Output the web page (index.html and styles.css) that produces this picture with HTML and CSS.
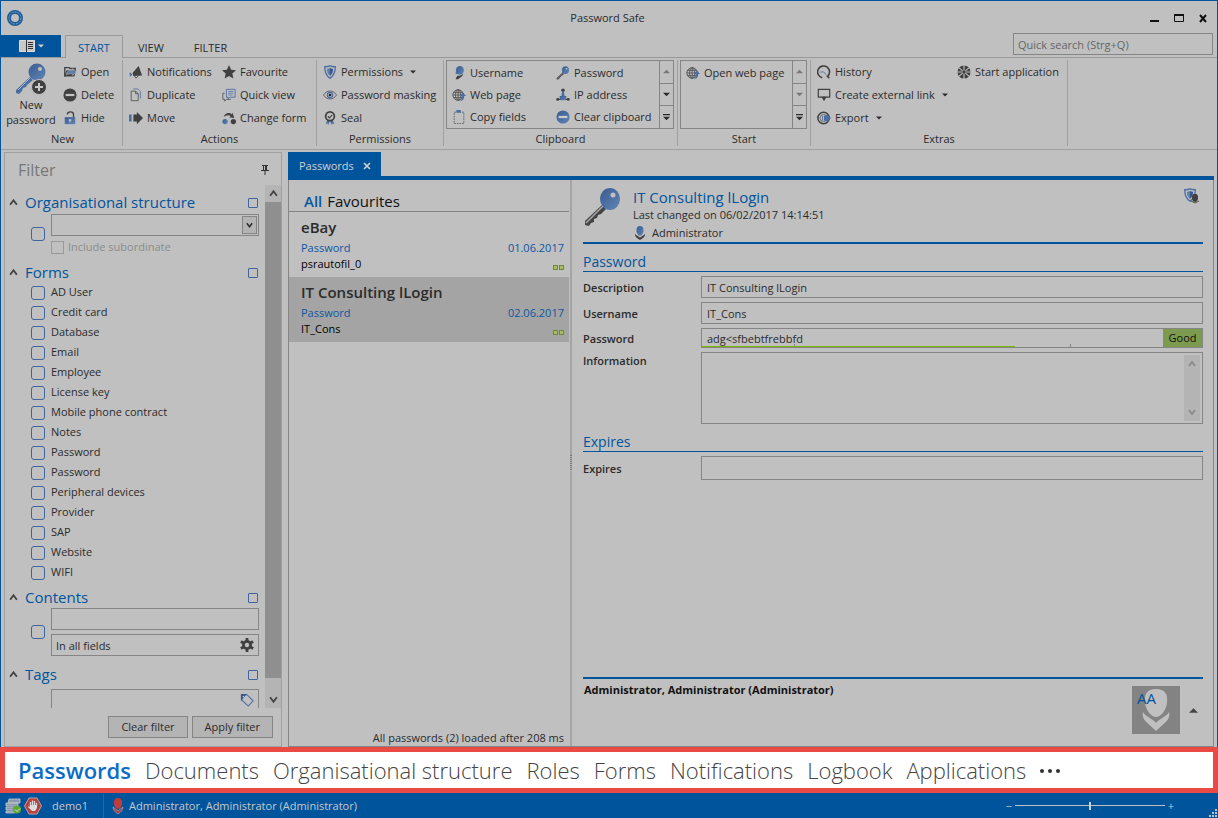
FILE: index.html
```html
<!DOCTYPE html>
<html lang="en">
<head>
  <meta charset="UTF-8" />
  <meta name="viewport" content="width=device-width, initial-scale=1.0" />
  <title>Password Safe</title>
  <link rel="stylesheet" href="styles.css">
</head>
<body>

<!-- Icon sprites -->
<svg class="sprites" aria-hidden="true">
  <defs>
    <linearGradient id="steel" x1="0" y1="0" x2="1" y2="1">
      <stop offset="0" stop-color="#3a5c92" />
      <stop offset="1" stop-color="#6084b4" />
    </linearGradient>
  </defs>
  <symbol id="i-key" viewBox="0 0 40 40">
    <path d="M19 18L2 34v4l4 1 2-3 3-1v-3l3-1 1-3 3-1 5-5z" fill="#444" />
    <path d="M20 19L3 36" stroke="#aaa" stroke-width="1.5" />
    <ellipse cx="27" cy="12" rx="10" ry="11" fill="url(#steel)" />
    <circle cx="30" cy="8" r="2.5" fill="#c0c0c0" />
  </symbol>
  <symbol id="i-newkey" viewBox="0 0 32 32">
    <path d="M15 14L1 27v3l3 1 3-3 1-3 3-1 1-2 6-5z" fill="#4c6da0" />
    <path d="M15 15L3 27" stroke="#a8b4c6" stroke-width="1" />
    <circle cx="22" cy="9" r="8.5" fill="url(#steel)" />
    <circle cx="25" cy="6" r="2" fill="#c0c0c0" />
    <circle cx="24" cy="24" r="7.5" fill="#404040" stroke="#c0c0c0" />
    <path d="M24 20v8M20 24h8" stroke="#c8c8c8" stroke-width="2" />
  </symbol>
  <symbol id="i-open" viewBox="0 0 16 16">
    <path d="M2 13V3h5l1 1h6v2" fill="none" stroke="#404040" stroke-width="1.5" />
    <path d="M1 13h12l2-7H4z" fill="#444" />
    <path d="M4 11c0-4 3-5 7-5V4l4 4-4 4v-2c-3 0-5 0-7 1z" fill="#5c7cac" stroke="#c0c0c0" stroke-width=".6" />
  </symbol>
  <symbol id="i-delete" viewBox="0 0 16 16">
    <circle cx="8" cy="8" r="7.5" fill="#404040" />
    <path d="M3 8h10" stroke="#c4c4c4" stroke-width="2.5" />
  </symbol>
  <symbol id="i-lock" viewBox="0 0 16 16">
    <path d="M5 4c0-4 7-4 7 0v4" fill="none" stroke="#404040" stroke-width="1.5" />
    <path d="M2 7h12v8H2z" fill="url(#steel)" />
    <path d="M8 9v4M6.5 10.5h3" stroke="#c8c8c8" stroke-width="1.3" />
  </symbol>
  <symbol id="i-horn" viewBox="0 0 16 16">
    <path d="M11 1l4 11-10 .5L4 9z" fill="#404040" />
    <path d="M1 9l2 3M1 12h1" stroke="#4a6da3" stroke-width="2" />
    <path d="M6 12l2 3 3-3" fill="none" stroke="#404040" />
  </symbol>
  <symbol id="i-copy" viewBox="0 0 16 16">
    <path d="M5 1h5l3 3v8" fill="none" stroke="#5577a8" />
    <path d="M2.5 3.5h5l3 3v8h-8z" fill="#c0c0c0" stroke="#555" />
    <path d="M7.5 3.5v3h3" fill="none" stroke="#555" />
  </symbol>
  <symbol id="i-move" viewBox="0 0 16 16">
    <path d="M0 4h3v8H0z" fill="#4a6da3" />
    <path d="M5 4h4V1l7 7-7 7v-3H5z" fill="#404040" />
  </symbol>
  <symbol id="i-star" viewBox="0 0 16 16">
    <path d="M8 0l2.4 5.3 5.6.6-4.2 3.8L13 15.5 8 12.6 3 15.5l1.2-5.8L0 5.9l5.6-.6z" fill="#404040" />
  </symbol>
  <symbol id="i-view" viewBox="0 0 16 16">
    <path d="M5 1.5h10v9H9l-2 2v-2H5z" fill="none" stroke="#4a6da3" />
    <path d="M7 4h6M7 6h6M7 8h5" stroke="#4a6da3" stroke-width=".8" />
    <path d="M3 6H1v7h2v2l2-2h5" fill="none" stroke="#555" />
  </symbol>
  <symbol id="i-change" viewBox="0 0 16 16">
    <circle cx="3.5" cy="12" r="3" fill="url(#steel)" />
    <circle cx="13" cy="12" r="3" fill="#404040" />
    <path d="M2 7c1-5 7-6 9-3l1-2 2 6-6-1 2-1C8 4 4 5 2 7z" fill="#404040" />
  </symbol>
  <symbol id="i-shield" viewBox="0 0 16 16">
    <path d="M8 1c2 1 4 1 6 1 0 6-1 10-6 13C3 12 2 8 2 2c2 0 4 0 6-1z" fill="#c0c0c0" stroke="#4a6da3" stroke-width="1.5" />
    <path d="M8 3.5v9C5 10 4.5 7 4.5 4.5z" fill="#5c7cac" />
    <path d="M8 3.5v9c3-2.5 3.5-5.5 3.5-8z" fill="#37588d" />
  </symbol>
  <symbol id="i-eye" viewBox="0 0 16 16">
    <path d="M.5 8c4-6 11-6 15 0-4 6-11 6-15 0z" fill="none" stroke="#555" />
    <circle cx="8" cy="8" r="3" fill="none" stroke="#4a6da3" stroke-width="1.5" />
    <circle cx="8" cy="8" r="1.5" fill="#222" />
  </symbol>
  <symbol id="i-seal" viewBox="0 0 16 16">
    <path d="M5 10l-2 5 2-1 1 2 2-5M11 10l2 5-2-1-1 2-2-5" fill="#4a6da3" />
    <circle cx="8" cy="6" r="5" fill="#c0c0c0" stroke="#404040" stroke-width="2" />
    <path d="M5.500 6l2 2 3-3.5" fill="none" stroke="#404040" stroke-width="1.3" />
  </symbol>
  <symbol id="i-user" viewBox="0 0 16 16">
    <ellipse cx="9" cy="5" rx="4.5" ry="5" fill="url(#steel)" />
    <path d="M5 4l-1 5h3z" fill="#4a6da3" />
    <path d="M4 15l2-4h3l4-2c-1 3-4 4-6 6z" fill="#404040" />
  </symbol>
  <symbol id="i-globe" viewBox="0 0 16 16">
    <circle cx="7" cy="8" r="6" fill="none" stroke="#484848" />
    <ellipse cx="7" cy="8" rx="3" ry="6" fill="none" stroke="#484848" stroke-width=".9" />
    <path d="M1 8h12M2 5h10M2 11h10M7 2v12" stroke="#484848" stroke-width=".9" />
    <path d="M8 15c4 0 3-3 3-6H9l3.5-4L16 9h-2c0 4-2 6-6 6z" fill="#4a6da3" />
  </symbol>
  <symbol id="i-paste" viewBox="0 0 16 16">
    <path d="M2.5 2.5h11v13h-11z" fill="none" stroke="#606060" stroke-dasharray="2 1" />
    <path d="M5 0h5v3H5z" fill="#4a6da3" />
  </symbol>
  <symbol id="i-ip" viewBox="0 0 16 16">
    <circle cx="8" cy="2.5" r="2" fill="#404040" />
    <path d="M7 4h2l1 6H6z" fill="#4a6da3" />
    <path d="M1 13h14" stroke="#404040" stroke-width="1.5" />
    <path d="M4 9h8l-1 5H5z" fill="url(#steel)" />
    <circle cx="2" cy="13" r="1.7" fill="#404040" />
    <circle cx="14" cy="13" r="1.7" fill="#404040" />
  </symbol>
  <symbol id="i-clear" viewBox="0 0 16 16">
    <circle cx="8" cy="8" r="7.5" fill="url(#steel)" />
    <path d="M3 8h10" stroke="#ccc" stroke-width="2.5" />
  </symbol>
  <symbol id="i-clock" viewBox="0 0 16 16">
    <path d="M6 14.5a6.800 6.800 0 1 1 6-1.5l2 2" fill="none" stroke="#404040" stroke-width="1.8" />
    <path d="M3 8h5l3 4" fill="none" stroke="#5577a8" />
  </symbol>
  <symbol id="i-link" viewBox="0 0 16 16">
    <path d="M1.5 1.5h13v9h-13z" fill="none" stroke="#404040" stroke-width="1.4" />
    <path d="M5 10h6l-3 5z" fill="#404040" />
  </symbol>
  <symbol id="i-export" viewBox="0 0 16 16">
    <circle cx="7.5" cy="8" r="6.5" fill="none" stroke="#404040" stroke-width="1.8" />
    <circle cx="7.5" cy="8" r="4" fill="none" stroke="#555" stroke-width=".8" />
    <path d="M6 5h1v6H6zM8 5h3V3l5 5-5 5v-2H8z" fill="#4a6da3" />
  </symbol>
  <symbol id="i-app" viewBox="0 0 16 16">
    <circle cx="8" cy="8" r="7.5" fill="#404040" />
    <path d="M8 0v16M0 8h16M2 3l12 10M14 3L2 13" stroke="#c0c0c0" stroke-width="1.3" />
    <circle cx="8" cy="8" r="2" fill="#404040" />
  </symbol>
  <symbol id="i-person" viewBox="0 0 16 16">
    <path d="M8 0c3 0 4 2 4 5s-2 6-4 6-4-3-4-6 1-5 4-5z" fill="url(#steel)" />
    <path d="M2 9l6 4 6-4c0 3-3 5-6 7-3-2-6-4-6-7z" fill="#404040" />
  </symbol>
  <symbol id="i-up" viewBox="0 0 8 8">
    <path d="M1 6l3-4 3 4" fill="none" stroke="currentColor" stroke-width="1.7" />
  </symbol>
  <symbol id="i-down" viewBox="0 0 8 8">
    <path d="M1 2l3 4 3-4" fill="none" stroke="currentColor" stroke-width="1.7" />
  </symbol>
  <symbol id="i-tri" viewBox="0 0 8 8">
    <path d="M0 2h8L4 6z" fill="currentColor" />
  </symbol>
  <symbol id="i-triup" viewBox="0 0 8 8">
    <path d="M0 6h8L4 2z" fill="currentColor" />
  </symbol>
  <symbol id="i-more" viewBox="0 0 8 8">
    <path d="M0 0h8v1.500H0zM0 3h8L4 7z" fill="currentColor" />
  </symbol>
</svg>

<div class="window">
  <header class="titlebar">
    <svg class="app-logo" viewBox="0 0 16 16"><circle cx="8" cy="8" r="6" fill="none" stroke="#1d5c98" stroke-width="4" /><circle cx="8" cy="8" r="6" fill="none" stroke="#7ba3c6" stroke-width="1" stroke-dasharray="2 1" /></svg>
    <h1>Password Safe</h1>
    <div class="window-buttons">
      <button aria-label="Minimise"><svg viewBox="0 0 10 10"><path d="M0 7h9v2H0z" fill="#111" /></svg></button>
      <button aria-label="Maximise"><svg viewBox="0 0 10 10"><path d="M.5 1.5h9v7h-9z" fill="none" stroke="#111" /><path d="M0 1h10v2H0z" fill="#111" /></svg></button>
      <button aria-label="Close"><svg viewBox="0 0 10 10"><path d="M2 2l6 7M8 2L2 9" stroke="#111" stroke-width="2" /></svg></button>
    </div>
  </header>

  <div class="tabs">
    <button class="file-tab" aria-label="Application menu">
      <svg class="file-icon" viewBox="0 0 16 12"><path d="M.5.5h15v11H.5z" fill="#c8c8c8" stroke="#ddd" /><path d="M7 0h1v12H7z" fill="#333" /><path d="M9 2.500h5M9 4.500h5M9 6.500h5M9 8.500h5" stroke="#333" /></svg>
      <svg class="caret"><use href="#i-tri" /></svg>
    </button>
    <button class="tab active">START</button>
    <button class="tab">VIEW</button>
    <button class="tab">FILTER</button>
    <input class="quick-search" type="text" placeholder="Quick search (Strg+Q)" aria-label="Quick search" />
  </div>

  <div class="ribbon">
    <section class="group group-new">
      <div class="group-body">
        <button class="big"><svg><use href="#i-newkey" /></svg><span>New<br>password</span></button>
        <div class="col">
          <button class="cmd"><svg><use href="#i-open" /></svg>Open</button>
          <button class="cmd"><svg><use href="#i-delete" /></svg>Delete</button>
          <button class="cmd"><svg><use href="#i-lock" /></svg>Hide</button>
        </div>
      </div>
      <h2>New</h2>
    </section>
    <section class="group group-actions">
      <div class="group-body">
        <div class="col">
          <button class="cmd"><svg><use href="#i-horn" /></svg>Notifications</button>
          <button class="cmd"><svg><use href="#i-copy" /></svg>Duplicate</button>
          <button class="cmd"><svg><use href="#i-move" /></svg>Move</button>
        </div>
        <div class="col">
          <button class="cmd"><svg><use href="#i-star" /></svg>Favourite</button>
          <button class="cmd"><svg><use href="#i-view" /></svg>Quick view</button>
          <button class="cmd"><svg><use href="#i-change" /></svg>Change form</button>
        </div>
      </div>
      <h2>Actions</h2>
    </section>
    <section class="group group-permissions">
      <div class="group-body">
        <div class="col">
          <button class="cmd"><svg><use href="#i-shield" /></svg>Permissions<svg class="caret"><use href="#i-tri" /></svg></button>
          <button class="cmd"><svg><use href="#i-eye" /></svg>Password masking</button>
          <button class="cmd"><svg><use href="#i-seal" /></svg>Seal</button>
        </div>
      </div>
      <h2>Permissions</h2>
    </section>
    <section class="group group-clipboard">
      <div class="gallery">
        <div class="gallery-items">
          <button class="cmd"><svg><use href="#i-user" /></svg>Username</button>
          <button class="cmd"><svg><use href="#i-key" /></svg>Password</button>
          <button class="cmd"><svg><use href="#i-globe" /></svg>Web page</button>
          <button class="cmd"><svg><use href="#i-ip" /></svg>IP address</button>
          <button class="cmd"><svg><use href="#i-paste" /></svg>Copy fields</button>
          <button class="cmd"><svg><use href="#i-clear" /></svg>Clear clipboard</button>
        </div>
        <div class="gallery-scroll">
          <button class="off" aria-label="Up"><svg><use href="#i-triup" /></svg></button>
          <button aria-label="Down"><svg><use href="#i-tri" /></svg></button>
          <button aria-label="More"><svg><use href="#i-more" /></svg></button>
        </div>
      </div>
      <h2>Clipboard</h2>
    </section>
    <section class="group group-start">
      <div class="gallery">
        <div class="gallery-items">
          <button class="cmd"><svg><use href="#i-globe" /></svg>Open web page</button>
        </div>
        <div class="gallery-scroll">
          <button class="off" aria-label="Up"><svg><use href="#i-triup" /></svg></button>
          <button class="off" aria-label="Down"><svg><use href="#i-tri" /></svg></button>
          <button aria-label="More"><svg><use href="#i-more" /></svg></button>
        </div>
      </div>
      <h2>Start</h2>
    </section>
    <section class="group group-extras">
      <div class="group-body">
        <div class="col">
          <button class="cmd"><svg><use href="#i-clock" /></svg>History</button>
          <button class="cmd"><svg><use href="#i-link" /></svg>Create external link<svg class="caret"><use href="#i-tri" /></svg></button>
          <button class="cmd"><svg><use href="#i-export" /></svg>Export<svg class="caret"><use href="#i-tri" /></svg></button>
        </div>
        <div class="col">
          <button class="cmd"><svg><use href="#i-app" /></svg>Start application</button>
        </div>
      </div>
      <h2>Extras</h2>
    </section>
  </div>

  <main class="workspace">
    <aside class="filter">
      <div class="filter-title">
        <h2>Filter</h2>
        <button class="pin" aria-label="Pin panel"><svg viewBox="0 0 8 10"><path d="M2.5 0v5M1 .5h6M0 5.5h8M4 6v4" fill="none" stroke="#333" /><path d="M4 0h2v5H4z" fill="#333" /></svg></button>
      </div>
      <div class="filter-scroll">
        <div class="filter-list">
          <section class="org">
            <h3><svg><use href="#i-up" /></svg><label for="all-org">Organisational structure</label><input type="checkbox" id="all-org" /></h3>
            <div class="filter-row">
              <input type="checkbox" aria-label="Use organisational structure" />
              <div class="fields">
                <div class="combo"><select aria-label="Organisational unit"><option></option></select><svg><use href="#i-down" /></svg></div>
                <label class="sub"><input type="checkbox" disabled />Include subordinate</label>
              </div>
            </div>
          </section>
          <section class="forms">
            <h3><svg><use href="#i-up" /></svg><label for="all-forms">Forms</label><input type="checkbox" id="all-forms" /></h3>
            <label class="check"><input type="checkbox" />AD User</label>
            <label class="check"><input type="checkbox" />Credit card</label>
            <label class="check"><input type="checkbox" />Database</label>
            <label class="check"><input type="checkbox" />Email</label>
            <label class="check"><input type="checkbox" />Employee</label>
            <label class="check"><input type="checkbox" />License key</label>
            <label class="check"><input type="checkbox" />Mobile phone contract</label>
            <label class="check"><input type="checkbox" />Notes</label>
            <label class="check"><input type="checkbox" />Password</label>
            <label class="check"><input type="checkbox" />Password</label>
            <label class="check"><input type="checkbox" />Peripheral devices</label>
            <label class="check"><input type="checkbox" />Provider</label>
            <label class="check"><input type="checkbox" />SAP</label>
            <label class="check"><input type="checkbox" />Website</label>
            <label class="check"><input type="checkbox" />WIFI</label>
          </section>
          <section class="contents">
            <h3><svg><use href="#i-up" /></svg><label for="all-contents">Contents</label><input type="checkbox" id="all-contents" /></h3>
            <div class="filter-row">
              <input type="checkbox" aria-label="Use contents" />
              <div class="fields">
                <input type="text" aria-label="Search text" />
                <div class="with-icon">
                  <input type="text" value="In all fields" aria-label="Search in" />
                  <svg viewBox="0 0 16 16"><circle cx="8" cy="8" r="4" fill="none" stroke="#404040" stroke-width="3.2" /><path d="M8 0v16M1 4l14 8M1 12l14-8" stroke="#404040" stroke-width="3.2" /><circle cx="8" cy="8" r="2.5" fill="#c0c0c0" /></svg>
                </div>
              </div>
            </div>
          </section>
          <section class="tags">
            <h3><svg><use href="#i-up" /></svg><label for="all-tags">Tags</label><input type="checkbox" id="all-tags" /></h3>
            <div class="fields">
              <div class="with-icon">
                <input type="text" aria-label="Tags" />
                <svg viewBox="0 0 16 16"><path d="M2 2h6l7 7-5.5 6L2 8z" fill="none" stroke="#4a6da3" stroke-width="1.2" /><path d="M1 1h7L1 9z" fill="#37588d" /><circle cx="4" cy="4" r="1" fill="#c0c0c0" /></svg>
              </div>
            </div>
          </section>
        </div>
        <div class="scrollbar">
          <button aria-label="Scroll up"><svg><use href="#i-up" /></svg></button>
          <div class="thumb"></div>
          <button aria-label="Scroll down"><svg><use href="#i-down" /></svg></button>
        </div>
      </div>
      <div class="filter-actions">
        <button>Clear filter</button>
        <button>Apply filter</button>
      </div>
    </aside>

    <div class="document">
      <div class="doc-tabs"><button>Passwords <svg viewBox="0 0 8 8"><path d="M1 1l6 6M7 1L1 7" stroke="#d0d0d0" stroke-width="1.7" /></svg></button></div>
      <div class="doc-body">
        <div class="list">
          <div class="list-tabs"><a class="current" href="#all">All</a><a href="#favourites">Favourites</a></div>
          <article class="entry">
            <h4>eBay</h4>
            <p class="meta"><span>Password</span><time>01.06.2017</time></p>
            <p class="login"><span>psrautofil_0</span><span class="quality"><i></i><i></i></span></p>
          </article>
          <article class="entry selected">
            <h4>IT Consulting lLogin</h4>
            <p class="meta"><span>Password</span><time>02.06.2017</time></p>
            <p class="login"><span>IT_Cons</span><span class="quality"><i></i><i></i></span></p>
          </article>
          <p class="list-status">All passwords (2) loaded after 208 ms</p>
        </div>
        <div class="splitter"><i></i></div>
        <div class="detail">
          <div class="detail-head">
            <svg class="key"><use href="#i-key" /></svg>
            <div class="detail-info">
              <h2>IT Consulting lLogin</h2>
              <p>Last changed on 06/02/2017 14:14:51</p>
              <p class="owner"><svg><use href="#i-person" /></svg>Administrator</p>
            </div>
            <svg class="rights" viewBox="0 0 16 16"><use href="#i-shield" width="14" height="14" /><path d="M12 6c3 0 3 2 3 4s-1 4-3 4-3-2-3-4 0-4 3-4z" fill="#404040" /><path d="M8 13l4 2 4-2" fill="none" stroke="#555" /></svg>
          </div>
          <h3>Password</h3>
          <div class="field"><label for="description">Description</label><input type="text" id="description" value="IT Consulting lLogin" /></div>
          <div class="field"><label for="username">Username</label><input type="text" id="username" value="IT_Cons" /></div>
          <div class="field short">
            <label for="password">Password</label>
            <div class="password-box">
              <input type="text" id="password" value="adg&lt;sfbebtfrebbfd" />
              <span class="strength"></span>
              <output>Good</output>
            </div>
          </div>
          <div class="field top">
            <label for="information">Information</label>
            <div class="memo">
              <textarea id="information"></textarea>
              <div class="memo-scroll"><svg><use href="#i-up" /></svg><svg><use href="#i-down" /></svg></div>
            </div>
          </div>
          <h3>Expires</h3>
          <div class="field expires"><label for="expires">Expires</label><input type="text" id="expires" /></div>
          <footer class="detail-foot">
            <strong>Administrator, Administrator (Administrator)</strong>
            <div class="avatar">
              <svg viewBox="0 0 48 48"><path d="M24 3c9 0 12 5 11 14-1 7-6 14-11 14S14 24 13 17C12 8 15 3 24 3z" fill="#c0c0c0" /><path d="M11 26c3 5 9 6 13 11 4-5 10-6 13-11 2 8-5 11-13 19-8-8-15-11-13-19z" fill="#c0c0c0" /></svg>
              <span>AA</span>
            </div>
            <button aria-label="Expand"><svg><use href="#i-triup" /></svg></button>
          </footer>
        </div>
      </div>
    </div>
  </main>
</div>

<nav class="modules">
  <a class="current" href="#passwords">Passwords</a>
  <a href="#documents">Documents</a>
  <a href="#organisation">Organisational structure</a>
  <a href="#roles">Roles</a>
  <a href="#forms">Forms</a>
  <a href="#notifications">Notifications</a>
  <a href="#logbook">Logbook</a>
  <a href="#applications">Applications</a>
  <button aria-label="More modules"><i></i><i></i><i></i></button>
</nav>

<footer class="statusbar">
  <svg viewBox="0 0 16 16"><path d="M4 1h11v4H3zM1 5h12v3H1zM1 9h12v3H1zM1 13h9v2H1z" fill="#8a9bb0" stroke="#c8c8c8" stroke-width=".8" /><circle cx="12" cy="11.5" r="4" fill="#5da832" /><path d="M10 11.5l2 2 3-3" fill="none" stroke="#ddd" /></svg>
  <svg class="hand" viewBox="0 0 18 18"><path d="M5 1h8l4.5 8-4.5 8H5L.5 9z" fill="#b8403f" stroke="#c0a0a0" /><path d="M6.5 9V5M8.5 8V3.5M10.5 8V4M12.5 9V6" stroke="#ddd" stroke-width="1.3" /><path d="M6 8h7v3l-2 3H8l-4-4 1-1 1 1z" fill="#ddd" /></svg>
  <span class="db">demo1</span>
  <svg viewBox="0 0 16 16"><path d="M8 0c3 0 4 2 4 5s-2 6-4 6-4-3-4-6 1-5 4-5z" fill="#c23b3b" /><path d="M3 9l5 4 5-4c0 3-2 5-5 7-3-2-5-4-5-7z" fill="#a83a48" stroke="#bbb" stroke-width=".6" /></svg>
  <span class="who">Administrator, Administrator (Administrator)</span>
  <div class="zoom"><span>−</span><input type="range" aria-label="Zoom" /><span>+</span></div>
  <svg class="grip" viewBox="0 0 9 9"><path d="M6 0h2v2H6zM3 3h2v2H3zM6 3h2v2H6zM0 6h2v2H0zM3 6h2v2H3zM6 6h2v2H6z" fill="#c0c0c0" /></svg>
</footer>

</body>
</html>
```
FILE: styles.css
```css
* {
  margin: 0;
  padding: 0;
  box-sizing: border-box;
}

body {
  display: flex;
  flex-direction: column;
  min-height: 100vh;
  background: #00549c;
  color: #2b2b2b;
  font-family: "Open Sans", "Noto Sans", sans-serif;
  font-size: 11px;
  line-height: 16px;
}

button, input, select, textarea {
  font: inherit;
  color: inherit;
  background: none;
  border: none;
  border-radius: 0;
  outline: none;
}

h1, h2, h3, h4 {
  font-size: 11px;
  font-weight: 400;
}

a {
  color: inherit;
  text-decoration: none;
}

svg {
  display: block;
  flex: none;
  width: 14px;
  height: 14px;
}

.sprites {
  position: absolute;
  width: 0;
  height: 0;
}

.window {
  flex: 1;
  display: flex;
  flex-direction: column;
  border: 1px solid #00549c;
  border-bottom: none;
  background: #c0c0c0;
}

/* Title bar */
.titlebar {
  display: grid;
  grid-template-columns: 1fr auto 1fr;
  align-items: center;
  height: 34px;
  padding: 0 9px 0 6px;
}

.app-logo {
  width: 16px;
  height: 16px;
}

.window-buttons {
  display: flex;
  justify-content: flex-end;
  gap: 14px;
}

.window-buttons svg {
  width: 10px;
  height: 10px;
}

/* Ribbon tabs */
.tabs {
  display: flex;
  height: 23px;
  padding-right: 4px;
  border-bottom: 1px solid #999;
}

.file-tab {
  display: flex;
  align-items: center;
  justify-content: center;
  gap: 3px;
  width: 60px;
  margin-right: 4px;
  background: #00549c;
  color: #d0d0d0;
}

.file-icon {
  width: 16px;
  height: 12px;
}

svg.caret {
  width: 6px;
  height: 6px;
}

.tab {
  height: 23px;
  padding: 2px 15px 0;
}

.tab.active {
  padding: 1px 12px 0;
  border: 1px solid #999;
  border-bottom: none;
  background: #c0c0c0;
  color: #00549c;
}

.quick-search {
  width: 200px;
  height: 22px;
  margin: -2px 0 0 auto;
  padding: 0 4px;
  border: 1px solid #858585;
}

.quick-search::placeholder {
  color: #666;
}

/* Ribbon */
.ribbon {
  display: flex;
  height: 92px;
  padding: 2px 0 3px 2px;
  border-bottom: 1px solid #a0a0a0;
}

.group {
  border-right: 1px solid #a0a0a0;
}

.group-body {
  display: flex;
  height: 69px;
}

.group h2 {
  margin-top: 2px;
  text-align: center;
}

.group-new { width: 120px; }
.group-actions { width: 194px; }
.group-permissions { width: 127px; }
.group-clipboard { width: 234px; }
.group-start { width: 133px; }
.group-extras { width: 257px; }

.cmd {
  display: flex;
  align-items: center;
  gap: 4px;
  height: 23px;
  white-space: nowrap;
}

.cmd .caret {
  margin-left: 3px;
}

.col {
  flex: none;
  padding-left: 6px;
}

.big {
  width: 56px;
  line-height: 15px;
}

.big svg {
  width: 32px;
  height: 32px;
  margin: 0 auto 2px;
}

.group-new .col {
  padding-left: 4px;
}

.group-actions .col {
  width: 93px;
}

.group-extras .col {
  width: 140px;
}

.gallery {
  display: flex;
  height: 69px;
  margin: 0 3px 0 2px;
  border: 1px solid #858585;
}

.gallery-items {
  flex: 1;
  display: grid;
  grid-template-columns: 104px 1fr;
  align-content: start;
  padding: 1px 0 0 5px;
}

.gallery .cmd {
  height: 22px;
}

.gallery-scroll {
  display: flex;
  flex-direction: column;
  width: 14px;
  border-left: 1px solid #858585;
}

.gallery-scroll button {
  flex: 1;
  display: flex;
  align-items: center;
  justify-content: center;
}

.gallery-scroll button + button {
  border-top: 1px solid #858585;
}

.gallery-scroll svg {
  width: 7px;
  height: 7px;
}

.gallery-scroll .off {
  color: #777;
}

/* Workspace */
.workspace {
  flex: 1;
  display: flex;
  gap: 6px;
  padding: 2px 3px 0;
}

/* Filter panel */
.filter {
  display: flex;
  flex-direction: column;
  width: 278px;
  border: 1px solid #a0a0a0;
}

.filter-title {
  display: flex;
  align-items: center;
  justify-content: space-between;
  height: 32px;
  padding: 2px 12px 0 13px;
}

.filter-title h2 {
  color: #777;
  font-size: 16px;
}

.pin svg {
  width: 8px;
  height: 10px;
}

.filter-scroll {
  flex: 1;
  display: flex;
}

.filter-list {
  flex: 1;
  height: 523px;
  padding: 7px 6px 0 4px;
  overflow: hidden;
}

.filter section {
  display: flex;
  flex-direction: column;
}

.filter h3 {
  display: flex;
  align-items: center;
  height: 20px;
  color: #00549c;
  font-size: 15px;
}

.filter h3 svg {
  width: 9px;
  height: 9px;
  margin-right: 7px;
  color: #444;
}

.filter h3 label {
  flex: 1;
}

input[type="checkbox"] {
  appearance: none;
  flex: none;
  width: 14px;
  height: 14px;
  border: 1px solid #3f659c;
  border-radius: 3px;
}

.filter h3 input {
  width: 10px;
  height: 10px;
  margin: 1px 1px 0 0;
  border-radius: 1px;
}

.org { height: 70px; }
.forms { height: 325px; }
.contents { height: 77px; }

.check {
  display: flex;
  align-items: center;
  gap: 6px;
  height: 20px;
  padding-left: 22px;
}

.check input {
  margin-top: 2px;
}

.filter-row {
  display: flex;
  align-items: center;
  gap: 6px;
  padding-left: 22px;
}

.fields {
  flex: 1;
  display: flex;
  flex-direction: column;
  gap: 4px;
  padding-top: 1px;
}

.org .fields {
  gap: 3px;
  padding-top: 2px;
}

.tags .fields {
  padding: 5px 0 0 42px;
}

.fields input[type="text"], .combo select {
  width: 100%;
  height: 22px;
  padding: 0 4px;
  border: 1px solid #858585;
}

.combo, .with-icon {
  position: relative;
  height: 22px;
}

.combo select {
  appearance: none;
}

.combo svg {
  position: absolute;
  right: 2px;
  top: 2px;
  width: 15px;
  height: 18px;
  padding: 3px;
  border: 1px solid #858585;
  background: #b4b4b4;
  pointer-events: none;
}

.with-icon svg {
  position: absolute;
  right: 5px;
  top: 4px;
}

.sub {
  display: flex;
  align-items: center;
  gap: 4px;
  color: #8c8c8c;
}

.sub input[type="checkbox"] {
  width: 13px;
  height: 13px;
  border-color: #999;
  border-radius: 0;
}

.scrollbar {
  display: flex;
  flex-direction: column;
  width: 16px;
  background: #b4b4b4;
  color: #444;
}

.scrollbar button {
  display: flex;
  align-items: center;
  justify-content: center;
  height: 17px;
}

.scrollbar svg {
  width: 9px;
  height: 9px;
}

.thumb {
  flex: 1;
  margin-bottom: 13px;
  background: #8f8f8f;
}

.filter-actions {
  display: flex;
  justify-content: flex-end;
  gap: 4px;
  padding: 8px;
}

.filter-actions button {
  height: 22px;
  padding: 0 12px;
  border: 1px solid #858585;
  background: #b4b4b4;
}

/* Document area */
.document {
  flex: 1;
  display: flex;
  flex-direction: column;
}

.doc-tabs {
  display: flex;
  border-bottom: 4px solid #00549c;
}

.doc-tabs button {
  display: flex;
  align-items: center;
  gap: 9px;
  height: 24px;
  padding: 3px 10px 0 11px;
  background: #00549c;
  color: #d0d0d0;
}

.doc-tabs svg {
  width: 8px;
  height: 8px;
}

.doc-body {
  flex: 1;
  display: flex;
  border: 1px solid #858585;
  border-top: none;
}

.list {
  display: flex;
  flex-direction: column;
  width: 281px;
  padding-right: 1px;
}

.list-tabs {
  display: flex;
  gap: 5px;
  height: 32px;
  padding: 11px 0 0 15px;
  border-bottom: 1px solid #858585;
  color: #111;
  font-size: 15px;
  line-height: 20px;
}

.list-tabs .current {
  color: #0b57a0;
  font-weight: 600;
}

.entry {
  height: 65px;
  padding: 5px 5px 0 12px;
}

.entry.selected {
  background: #a4a4a4;
}

.entry h4 {
  margin-bottom: 2px;
  font-size: 15px;
  font-weight: 600;
  line-height: 21px;
}

.entry p {
  display: flex;
  justify-content: space-between;
}

.meta {
  color: #0b57a0;
}

.login {
  color: #000;
}

.quality {
  display: flex;
  align-items: flex-end;
  gap: 1px;
  padding-bottom: 2px;
}

.quality i {
  width: 5px;
  height: 5px;
  border: 1px solid #71873f;
  background: #a9bd60;
}

.list-status {
  margin-top: auto;
  padding-right: 5px;
  text-align: right;
}

.splitter {
  display: flex;
  align-items: center;
  width: 2px;
  background: #a4a4a4;
}

.splitter i {
  width: 2px;
  height: 16px;
  background: repeating-linear-gradient(#777 0 1px, #b4b4b4 1px 2px);
}

/* Detail view */
.detail {
  flex: 1;
  display: flex;
  flex-direction: column;
  padding: 7px 10px 0 11px;
}

.detail-head {
  display: flex;
  height: 57px;
  border-bottom: 2px solid #00549c;
}

.key {
  width: 40px;
  height: 40px;
}

.detail-info {
  flex: 1;
  padding-left: 10px;
}

.detail-info h2 {
  color: #00549c;
  font-size: 15px;
  line-height: 20px;
}

.owner {
  display: flex;
  align-items: center;
  gap: 5px;
  height: 20px;
}

.rights {
  width: 16px;
  height: 16px;
  margin: 1px 4px 0 0;
}

.detail h3 {
  height: 28px;
  margin-bottom: 4px;
  padding-top: 8px;
  border-bottom: 1px solid #00549c;
  color: #00549c;
  font-size: 14px;
  line-height: 20px;
}

.field {
  display: flex;
  align-items: center;
  min-height: 22px;
  margin-bottom: 4px;
}

.field label {
  width: 118px;
  padding-top: 1px;
  font-weight: 600;
}

.field input, .field textarea {
  flex: 1;
  height: 22px;
  padding: 0 5px;
  border: 1px solid #858585;
}

.field.short {
  min-height: 20px;
}

.field.expires input {
  height: 24px;
}

.field.top {
  align-items: flex-start;
  margin-bottom: 0;
}

.password-box {
  flex: 1;
  position: relative;
  display: flex;
  height: 20px;
}

.password-box input {
  height: 20px;
}

.password-box output {
  position: absolute;
  right: 1px;
  top: 1px;
  width: 39px;
  height: 18px;
  background: #7d9b4f;
  color: #111;
  line-height: 18px;
  text-align: center;
}

/* Filled part, then the 20% and 80% marks */
.strength {
  position: absolute;
  left: 1px;
  right: 40px;
  bottom: 1px;
  height: 3px;
  background:
    linear-gradient(#7ab800, #7ab800) left bottom / 68% 1px no-repeat,
    linear-gradient(#858585, #858585) 20% 0 / 1px 100% no-repeat,
    linear-gradient(#858585, #858585) 80% 0 / 1px 100% no-repeat;
}

.memo {
  flex: 1;
  position: relative;
  display: flex;
}

.memo textarea {
  height: 72px;
  resize: none;
}

.memo-scroll {
  position: absolute;
  top: 3px;
  right: 3px;
  bottom: 3px;
  display: flex;
  flex-direction: column;
  justify-content: space-between;
  padding: 5px 4px;
  background: #b4b4b4;
  color: #888;
}

.memo-scroll svg {
  width: 8px;
  height: 8px;
}

.detail-foot {
  display: flex;
  align-items: flex-start;
  height: 69px;
  margin-top: auto;
  border-top: 2px solid #00549c;
}

.detail-foot strong {
  flex: 1;
  padding: 3px 0 0 1px;
  color: #111;
}

.avatar {
  position: relative;
  width: 48px;
  height: 48px;
  margin-top: 7px;
  background: #838383;
}

.avatar svg {
  width: 48px;
  height: 48px;
}

.avatar span {
  position: absolute;
  left: 5px;
  top: 4px;
  color: #00549c;
  font-size: 15px;
}

.detail-foot button {
  padding: 27px 5px 0 9px;
  color: #444;
}

.detail-foot button svg {
  width: 9px;
  height: 9px;
}

/* Module navigation */
.modules {
  display: flex;
  align-items: center;
  gap: 14px;
  height: 46px;
  padding: 1px 13px 0;
  border: 5px solid #e94b44;
  background: #fff;
  color: #444;
  font-size: 22px;
  font-weight: 300;
  line-height: 35px;
  white-space: nowrap;
}

.modules .current {
  color: #0a6cc8;
  font-weight: 600;
}

.modules button {
  display: flex;
  gap: 4px;
}

.modules i {
  width: 4px;
  height: 4px;
  border-radius: 50%;
  background: #333;
}

/* Status bar */
.statusbar {
  display: flex;
  align-items: center;
  height: 25px;
  padding-left: 5px;
  color: #c8c8c8;
}

.statusbar svg {
  width: 16px;
  height: 16px;
}

.statusbar .hand {
  width: 18px;
  height: 18px;
  margin-left: 3px;
}

.db {
  margin-right: 6px;
  padding: 0 15px 0 10px;
  border-right: 1px solid #1e67a8;
  line-height: 24px;
}

.who {
  margin-left: 3px;
}

.zoom {
  display: flex;
  align-items: center;
  gap: 3px;
  margin-left: auto;
}

.zoom input {
  appearance: none;
  width: 150px;
  height: 8px;
  background: linear-gradient(#c0c0c0, #c0c0c0) center / 100% 1px no-repeat;
}

.zoom input::-webkit-slider-thumb {
  appearance: none;
  width: 2px;
  height: 8px;
  background: #d0d0d0;
}

.statusbar .grip {
  align-self: flex-end;
  width: 9px;
  height: 9px;
  margin-left: 35px;
}
```
